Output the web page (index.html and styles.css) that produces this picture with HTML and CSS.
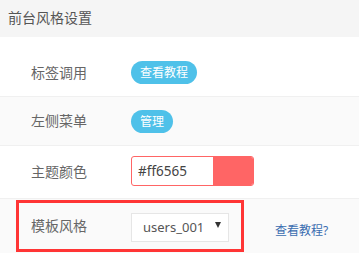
FILE: index.html
```html
<!DOCTYPE html>
<html lang="zh-CN">
<head>
<meta charset="utf-8">
<title>前台风格设置</title>
<link rel="stylesheet" href="styles.css">
</head>
<body>
<div class="panel">
  <div class="panel-head">前台风格设置</div>
  <div class="form">
    <div class="row row-1">
      <div class="label">标签调用</div>
      <div class="field"><span class="pill">查看教程</span></div>
    </div>
    <div class="row row-2 alt">
      <div class="label">左侧菜单</div>
      <div class="field"><span class="pill">管理</span></div>
    </div>
    <div class="row row-3">
      <div class="label">主题颜色</div>
      <div class="field">
        <div class="color-input">
          <span class="color-text">#ff6565</span>
          <span class="swatch"></span>
        </div>
      </div>
    </div>
    <div class="row row-4 alt">
      <div class="label">模板风格</div>
      <div class="field">
        <div class="select"><span class="select-text">users_001</span><span class="caret"></span></div>
        <a class="help" href="#">查看教程?</a>
      </div>
      <div class="highlight"></div>
    </div>
  </div>
</div>
</body>
</html>
```
FILE: styles.css
```css
html, body {
  margin: 0;
  padding: 0;
  background: #fff;
}
body {
  font-family: "Noto Sans", "Noto Sans CJK SC", sans-serif;
  font-size: 14px;
  color: #666;
}
.panel-head {
  height: 37px;
  line-height: 35px;
  padding-left: 8px;
  background: #f5f5f5;
  color: #555;
  font-size: 14px;
}
.form {
  margin-top: 12px;
}
.row {
  position: relative;
  display: flex;
  align-items: center;
  border-top: 1px solid #f0f0f0;
  box-sizing: border-box;
}
.row-1 { height: 47px; border-top: none; }
.row-2 { height: 49px; }
.row-3 { height: 53px; }
.row-4 { height: 55px; }
.alt { background: #fafafa; }
.label {
  width: 100px;
  padding-left: 31px;
  color: #666;
  line-height: 20px;
}
.field {
  display: flex;
  align-items: center;
}
.pill {
  display: inline-block;
  height: 23px;
  line-height: 23px;
  padding: 0 9px;
  border-radius: 12px;
  background: #4fc1e9;
  color: #fff;
  font-size: 12px;
}
.color-input {
  display: flex;
  width: 123px;
  height: 30px;
  box-sizing: border-box;
  border: 1px solid #ff6565;
  border-radius: 3px;
  overflow: hidden;
  background: #fff;
  margin-top: -2px;
}
.color-text {
  flex: 1;
  padding-left: 6px;
  line-height: 28px;
  color: #444;
  font-size: 13.5px;
}
.swatch {
  width: 40px;
  background: #ff6565;
}
.select {
  display: flex;
  align-items: center;
  justify-content: space-between;
  width: 98px;
  height: 29px;
  box-sizing: border-box;
  border: 1px solid #e6e6e6;
  background: #fff;
  padding: 0 7px 0 11px;
  margin-top: 2px;
}
.select-text {
  color: #555;
  font-size: 13px;
}
.caret {
  width: 0;
  height: 0;
  border-left: 3px solid transparent;
  border-right: 3px solid transparent;
  border-top: 6px solid #333;
  margin-top: -4px;
}
.help {
  margin-left: 46px;
  margin-top: 7px;
  color: #3a6db0;
  font-size: 12px;
  text-decoration: none;
}
.highlight {
  position: absolute;
  left: 16px;
  top: 1px;
  width: 228px;
  height: 52px;
  box-sizing: border-box;
  border: 3px solid #ff3535;
  pointer-events: none;
}
```
